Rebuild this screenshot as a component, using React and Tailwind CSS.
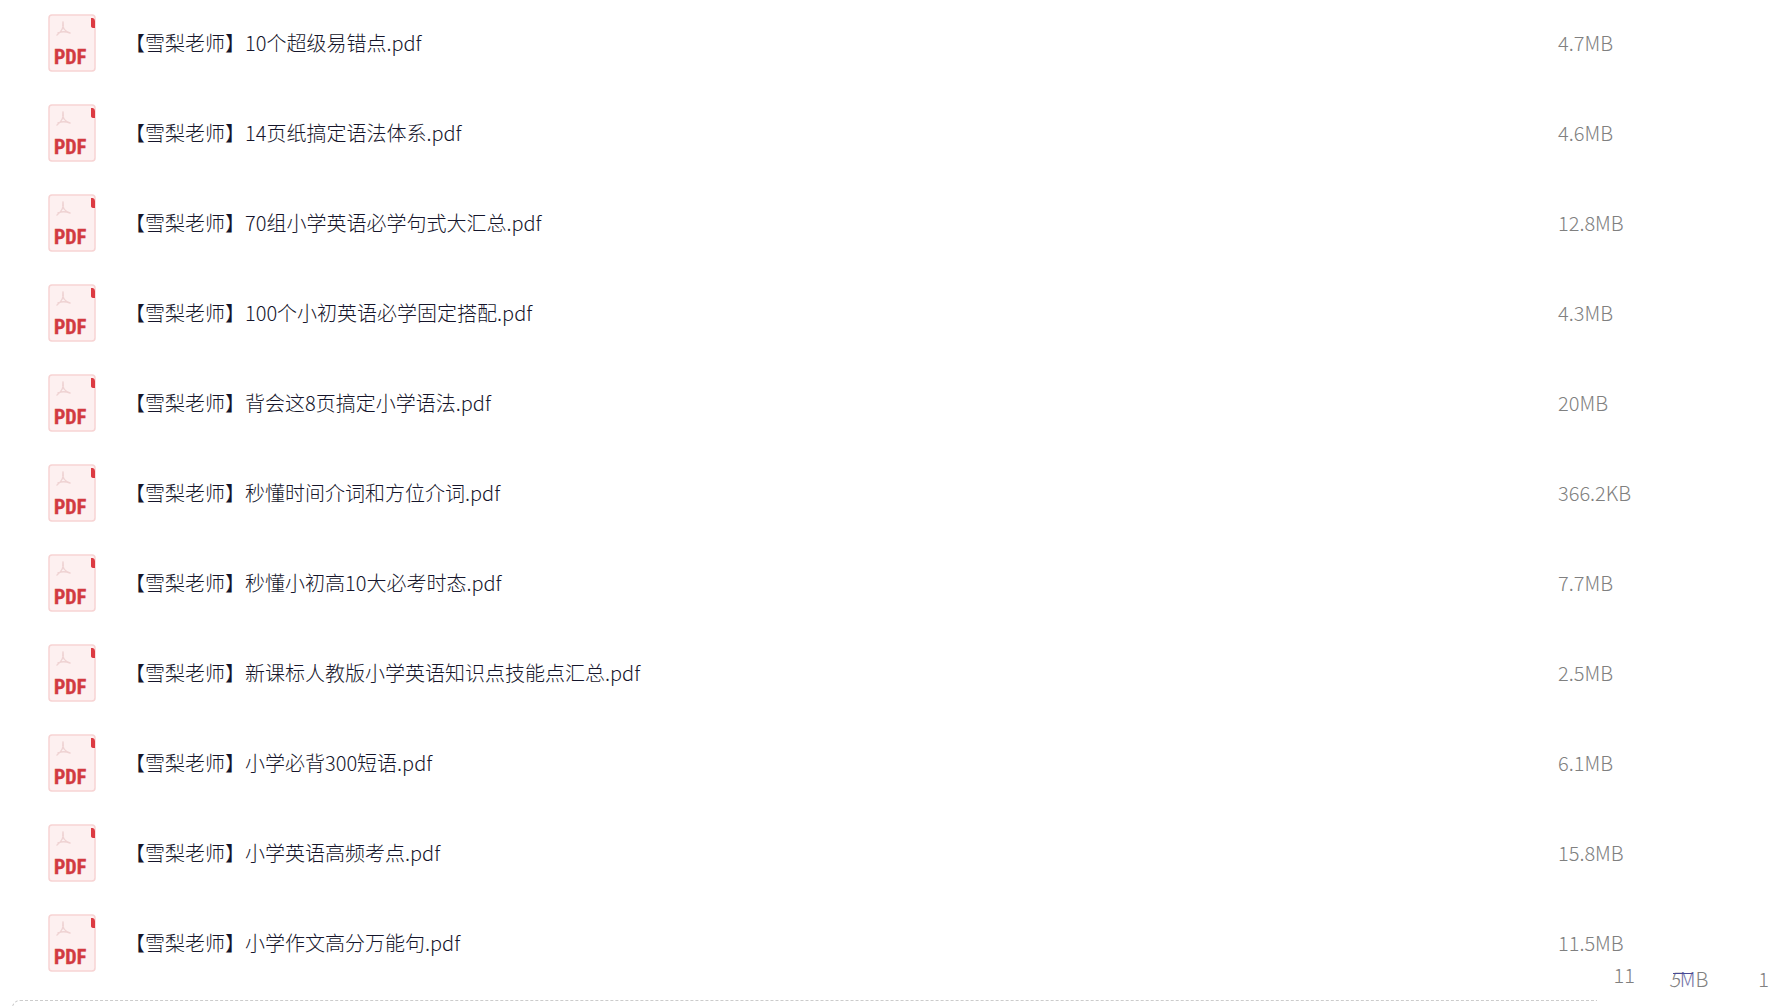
import React from "react";

const files = [
  { name: "【雪梨老师】10个超级易错点.pdf", size: "4.7MB" },
  { name: "【雪梨老师】14页纸搞定语法体系.pdf", size: "4.6MB" },
  { name: "【雪梨老师】70组小学英语必学句式大汇总.pdf", size: "12.8MB" },
  { name: "【雪梨老师】100个小初英语必学固定搭配.pdf", size: "4.3MB" },
  { name: "【雪梨老师】背会这8页搞定小学语法.pdf", size: "20MB" },
  { name: "【雪梨老师】秒懂时间介词和方位介词.pdf", size: "366.2KB" },
  { name: "【雪梨老师】秒懂小初高10大必考时态.pdf", size: "7.7MB" },
  { name: "【雪梨老师】新课标人教版小学英语知识点技能点汇总.pdf", size: "2.5MB" },
  { name: "【雪梨老师】小学必背300短语.pdf", size: "6.1MB" },
  { name: "【雪梨老师】小学英语高频考点.pdf", size: "15.8MB" },
  { name: "【雪梨老师】小学作文高分万能句.pdf", size: "11.5MB" },
];

const PdfIcon = () => (
  <svg width="48" height="58" viewBox="0 0 48 58" className="shrink-0" role="img" aria-label="PDF">
    <rect x="1" y="1" width="46" height="56" rx="3" fill="#fdf0f0" stroke="#f7d3d3" strokeWidth="1.5" />
    <path d="M43 4 h2 q2 1 2 3 v7 h-1 q-3 0 -3 -2 z" fill="#dc3a42" />
    <path
      d="M15 8 c-1 5 1 9 7 11 M15 8 c1 5 -2 10 -6 13 M10 19 c4 -2 7 -2 12 0"
      fill="none"
      stroke="#efd3d3"
      strokeWidth="1.5"
      strokeLinecap="round"
    />
    <text
      x="6"
      y="50"
      fontSize="20"
      fontWeight="700"
      fill="#d23a40"
      stroke="#d23a40"
      strokeWidth="0.4"
      className="font-['Roboto_Condensed','Liberation_Sans_Narrow','DejaVu_Sans_Condensed',sans-serif]"
    >
      PDF
    </text>
  </svg>
);

const FileRow = ({ file }) => (
  <li className="flex items-center">
    <PdfIcon />
    <span className="ml-[29px] flex-1 text-[#15152b]">{file.name}</span>
    <span className="w-[213px] text-[#808080]">{file.size}</span>
  </li>
);

export default function App() {
  return (
    <main className="overflow-hidden bg-white font-['Noto_Sans_CJK_SC',sans-serif] text-[20px] leading-7 font-light">
      <ul className="flex flex-col gap-8 pt-[14px] pl-12">
        {files.map((file) => (
          <FileRow key={file.name} file={file} />
        ))}
      </ul>
      {/* next row, cut off by the edge of the list */}
      <div className="-mt-[11px] flex h-[39px] items-start justify-end pr-0.5 text-[#808080]">
        <span>11</span>
        <span className="relative mt-1 ml-[34px]">
          <i>5</i>
          <span className="text-[#7474a8]">M</span>B
          <span className="absolute top-[8px] left-1 h-px w-5 bg-[#4a4a96]" />
        </span>
        <span className="mt-1 ml-[50px]">1</span>
      </div>
      <div className="mr-[174px] ml-3 h-2 rounded-tl-lg border-t border-l border-dashed border-[#cccccc]" />
    </main>
  );
}
